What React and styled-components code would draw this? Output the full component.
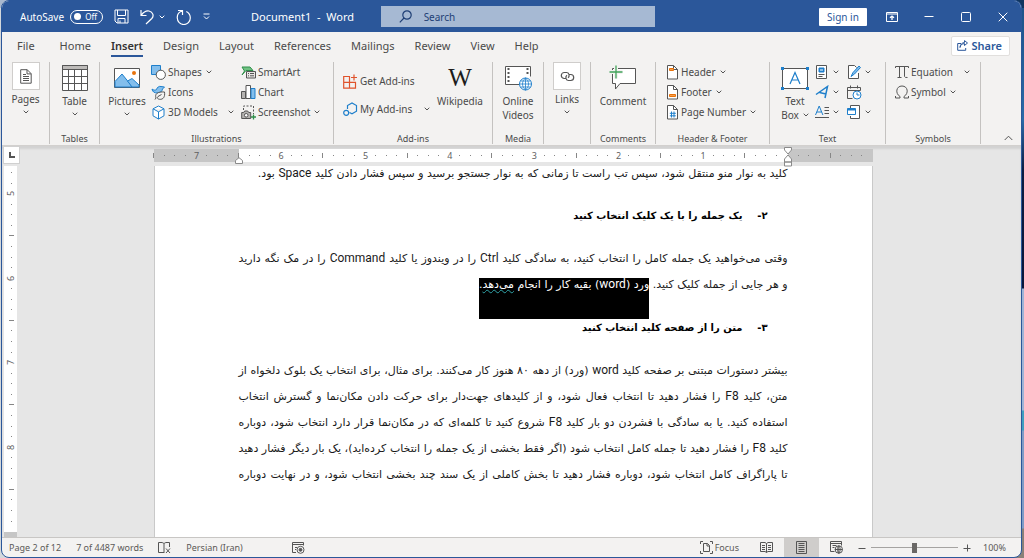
import React from 'react';
import styled, { createGlobalStyle, css, ThemeProvider } from 'styled-components';

const theme = {
  color: {
    brand: '#2b579a',
    ribbon: '#f3f2f1',
    canvas: '#e6e6e6',
    text: '#4a4a4a',
    line: '#c4c2c0',
  },
  font: {
    ui: "'Noto Sans', 'Open Sans', sans-serif",
    persian: "'DejaVu Sans', sans-serif",
    latin: 'Roboto, sans-serif',
  },
};

const GlobalStyle = createGlobalStyle`
  *, *::before, *::after {
    box-sizing: border-box;
  }
  body {
    min-height: 100vh;
    margin: 0;
    background:
      linear-gradient(to right, #a9b9cf 86%, #10355f 87%) top / 100% 8px no-repeat,
      linear-gradient(#d3d8dc, #d3d8dc) left / 12px 100% no-repeat,
      linear-gradient(#1d5288 0, #2a6aa8 120px, #0b1d42 170px, #08163a 288px, #9fb4d6 289px,
        #9fb4d6 410px, #3f9fc0 411px, #3f9fc0 430px, #7f9cc6 431px, #7f9cc6 528px, #8a8078 529px);
  }
  button, input {
    font: inherit;
    color: inherit;
  }
  button {
    padding: 0;
    border: 0;
    background: none;
  }
`;

const Window = styled.div`
  display: flex;
  flex-direction: column;
  height: 100vh;
  margin: 0 2px 0 1px;
  border: 1px solid ${({ theme }) => theme.color.brand};
  border-radius: 8px;
  overflow: hidden;
  background: ${({ theme }) => theme.color.ribbon};
  color: ${({ theme }) => theme.color.text};
  font-family: ${({ theme }) => theme.font.ui};
  font-size: 10px;
  line-height: 14px;
  white-space: nowrap;
`;

/* title bar */

const TitleBar = styled.header`
  display: grid;
  grid-template-columns: 379fr 275fr 366fr;
  align-items: center;
  flex: 0 0 31px;
  background: ${({ theme }) => theme.color.brand};
  color: #ffffff;
`;

const QuickAccess = styled.div`
  display: flex;
  align-items: center;
  padding-left: 18px;
`;

const AutoSave = styled.label`
  display: flex;
  align-items: center;
  gap: 6px;
  margin-right: 11px;
`;

const Toggle = styled.input`
  appearance: none;
  display: flex;
  align-items: center;
  justify-content: space-between;
  width: 33px;
  height: 14px;
  margin: 0;
  padding: 0 5px 0 3px;
  border: 1px solid #ffffff;
  border-radius: 7px;
  font-size: 8px;
  line-height: 12px;

  &::before {
    content: '';
    width: 7px;
    height: 7px;
    border-radius: 50%;
    background: #ffffff;
  }

  &::after {
    content: 'Off';
  }
`;

const BarButton = styled.button`
  display: flex;
  align-items: center;
  gap: 5px;
  margin-right: 11px;
`;

const DocTitle = styled.span`
  margin-left: 30px;
  font-size: 11px;
  white-space: pre;
`;

const SearchBox = styled.label`
  display: flex;
  align-items: center;
  gap: 12px;
  height: 21px;
  padding-left: 18px;
  background: #a6b9d3;
  color: #1f3f75;
`;

const SearchInput = styled.input`
  flex: 1;
  min-width: 0;
  padding: 0;
  border: 0;
  background: none;
  font-size: 10px;

  &::placeholder {
    color: #1f3f75;
    opacity: 1;
  }
`;

const WindowControls = styled.div`
  display: flex;
  align-items: center;
  justify-content: flex-end;
  padding-right: 12px;
`;

const SignIn = styled.button`
  width: 48px;
  height: 18px;
  margin-right: 18px;
  border-radius: 1px;
  background: #ffffff;
  color: ${({ theme }) => theme.color.brand};
`;

const ControlButton = styled.button`
  display: flex;
  justify-content: center;
  width: 12px;
  margin-left: ${({ $gap }) => $gap || 25}px;
`;

/* tabs */

const TabRow = styled.nav`
  display: flex;
  align-items: center;
  flex: 0 0 27px;
  padding: 0 11px 0 5px;
  font-size: 11px;
`;

const Tab = styled.a`
  position: relative;
  padding: 0 10px;
  line-height: 22px;
  color: inherit;
  text-decoration: none;

  &:first-child {
    margin-right: 5px;
  }

  ${({ $active }) =>
    $active &&
    css`
      color: #333333;
      font-weight: 600;

      &::after {
        content: '';
        position: absolute;
        right: 10px;
        bottom: 0;
        left: 10px;
        height: 2px;
        background: ${({ theme }) => theme.color.brand};
      }
    `}
`;

const ShareButton = styled.button`
  display: flex;
  align-items: center;
  gap: 4px;
  height: 20px;
  margin-left: auto;
  padding: 0 7px 0 5px;
  border: 1px solid #e1dfdd;
  border-radius: 2px;
  background: #ffffff;
  color: ${({ theme }) => theme.color.brand};
  font-weight: 600;
`;

/* ribbon */

const Ribbon = styled.section`
  display: flex;
  flex: 0 0 87px;
  padding-top: 3px;
  border-bottom: 1px solid #d2d0ce;
`;

const Group = styled.div`
  display: flex;
  flex-direction: column;
  justify-content: space-between;
  width: ${({ $width }) => $width}px;
  height: 82px;
  border-right: 1px solid ${({ theme }) => theme.color.line};
`;

const GroupBody = styled.div`
  display: flex;
  justify-content: ${({ $center }) => ($center ? 'center' : 'flex-start')};
  padding-left: ${({ $indent }) => $indent || 0}px;
`;

const GroupLabel = styled.div`
  font-size: 9px;
  line-height: 10px;
  text-align: center;
`;

const BigButton = styled.button`
  display: flex;
  flex-direction: column;
  align-items: center;
  width: ${({ $width }) => ($width ? `${$width}px` : 'auto')};
`;

const BigIcon = styled.span`
  display: flex;
  align-items: center;
  justify-content: center;
  height: 32px;
`;

const IconTile = styled.span`
  display: flex;
  align-items: center;
  justify-content: center;
  width: 28px;
  height: 28px;
  margin-bottom: 2px;
  border: 1px solid #cfcdcb;
  background: #ffffff;
`;

const ArrowLine = styled.span`
  display: flex;
  align-items: center;
  justify-content: center;
  height: 12px;
`;

const LabelWithArrow = styled.span`
  display: flex;
  align-items: center;
  gap: 4px;
`;

const Column = styled.div`
  display: flex;
  flex-direction: column;
  width: ${({ $width }) => ($width ? `${$width}px` : 'auto')};
  padding-top: ${({ $top }) => $top || 0}px;
`;

const RowButton = styled.button`
  display: flex;
  align-items: center;
  gap: 2px;
  height: ${({ $tall }) => ($tall ? 28 : 20)}px;
  padding-right: 7px;

  svg:last-child:not(:first-child) {
    margin-left: ${({ $spread }) => ($spread ? 'auto' : '2px')};
  }
`;

const CollapseButton = styled.button`
  display: flex;
  align-self: flex-end;
  margin: 0 8px 4px auto;
`;

/* document */

const Workspace = styled.main`
  display: grid;
  grid-template-columns: minmax(20px, 1fr) minmax(0, 719px) minmax(20px, 1fr);
  flex: 1;
  min-height: 0;
  padding-left: 3px;
  border-bottom: 1px solid #c8c6c4;
  background: ${({ theme }) => theme.color.canvas};
  box-shadow: inset 0 3px 2px #d2d2d2;
`;

const RulerSide = styled.div`
  display: flex;
  flex-direction: column;
  width: 17px;
  margin-left: -2px;
`;

const TabStop = styled.button`
  display: flex;
  align-items: center;
  justify-content: center;
  flex: 0 0 18px;
  margin-bottom: 2px;
  border: 1px solid #d0d0d0;
  background: #ffffff;
`;

const VerticalRuler = styled.div`
  display: flex;
  flex: 1;
  flex-direction: column;
  align-items: center;
  justify-content: space-between;
  width: 13px;
  min-height: 0;
  margin-left: 1px;
  padding: 7px 0 10px;
  background: #ffffff;
`;

const RulerEnd = styled.div`
  flex: 0 0 5px;
  width: 13px;
  margin-left: 1px;
  background: #c6c6c6;
`;

const PageColumn = styled.div`
  display: flex;
  flex-direction: column;
  min-height: 0;
  padding-top: 3px;
`;

const HorizontalRuler = styled.div`
  display: flex;
  flex: 0 0 13px;
  margin-bottom: 4px;
`;

const RulerPart = styled.div`
  position: relative;
  display: flex;
  align-items: center;
  justify-content: space-between;
  flex: ${({ $margin }) => ($margin ? '0 0 85px' : '1')};
  background: ${({ $margin }) => ($margin ? '#c6c6c6' : '#ffffff')};
`;

const Tick = styled.span`
  display: flex;
  align-items: center;
  justify-content: center;
  width: 0;
  height: 0;
  font-size: 9px;
  color: #5f5f5f;
  transform: ${({ $turned }) => ($turned ? 'rotate(-90deg)' : 'none')};

  &::before {
    content: '';
    flex: none;
    width: 1px;
    height: ${({ $kind }) => ({ dot: 1, bar: 5 }[$kind] || 0)}px;
    background: #868686;
  }
`;

const Indent = styled.svg`
  position: absolute;
  z-index: 1;
  left: ${({ $side }) => ($side === 'left' ? '-4px' : 'auto')};
  right: ${({ $side }) => ($side === 'right' ? '-4px' : 'auto')};
  top: ${({ $top }) => $top}px;
`;

const Page = styled.article`
  flex: 1;
  min-height: 0;
  overflow: hidden;
  padding: 0 84px;
  border-right: 1px solid #c9c9c9;
  border-left: 1px solid #c9c9c9;
  background: #ffffff;
  color: #1a1a1a;
  font-family: ${({ theme }) => theme.font.persian};
  font-size: 11px;
  line-height: 26px;
  direction: rtl;
`;

const Flow = styled.div`
  display: flex;
  flex-direction: column;
  gap: 17px;
`;

const Paragraph = styled.p`
  margin: 0;

  /* the page is scrolled to the middle of this one */
  &:first-child {
    padding-bottom: 5px;
    line-height: 14px;
  }
`;

const Line = styled.span`
  display: block;
  text-align-last: ${({ $ragged }) => ($ragged ? 'right' : 'justify')};
`;

const Latin = styled.span`
  font-family: ${({ theme }) => theme.font.latin};
  font-size: 12px;
  line-height: 14px;
`;

const Heading = styled.h2`
  display: flex;
  margin: 0;
  padding-right: 20px;
  color: #000000;
  font-size: 10px;
  font-weight: 700;
`;

const HeadingNumber = styled.span`
  width: 25px;
`;

const Selected = styled.mark`
  padding-bottom: 28px;
  background: #000000;
  color: #ffffff;
`;

const Flagged = styled.span`
  text-decoration: underline wavy #2fa3a8 1px;
`;

/* status bar */

const StatusBar = styled.footer`
  display: flex;
  align-items: center;
  flex: 0 0 19px;
  padding: 0 15px 0 7px;
  color: #5c5a58;
  font-size: 9px;
`;

const StatusButton = styled.button`
  display: flex;
  align-items: center;
  justify-content: center;
  gap: 2px;
  height: 19px;
  margin-right: ${({ $after }) => $after || 0}px;
`;

const ViewButton = styled.button`
  display: flex;
  align-items: center;
  justify-content: center;
  width: 35px;
  height: 19px;
  background: ${({ $active }) => ($active ? '#cfcdcb' : 'none')};
`;

const StatusRight = styled.div`
  display: flex;
  align-items: center;
  margin-left: auto;
`;

const Zoom = styled.div`
  display: flex;
  align-items: center;
  margin-left: 4px;
`;

const ZoomSlider = styled.input`
  appearance: none;
  width: 87px;
  height: 11px;
  margin: 0 5px;
  background: linear-gradient(#a5a3a1, #a5a3a1) center / 100% 1px no-repeat;

  &::-webkit-slider-thumb {
    appearance: none;
    width: 5px;
    height: 10px;
    background: #6a6866;
  }
`;

const ZoomValue = styled.span`
  width: 35px;
  text-align: right;
`;

/* icons */

const Icon = ({ w = 14, h = 14, children, ...rest }) => (
  <svg width={w} height={h} viewBox={`0 0 ${w} ${h}`} fill="none" stroke="#555" strokeWidth="1" aria-hidden="true" {...rest}>
    {children}
  </svg>
);

const Arrow = ({ color = '#555' }) => (
  <Icon w={6} h={4} stroke={color}><path d="M.7.7 3 3 5.3.7" /></Icon>
);

const SaveIcon = () => (
  <Icon w={15} h={15} stroke="#fff"><path d="M1 1h13v13H3l-2-2zM3.5 1v5.500h8V1M4 14V9.500h7V14M6 14v-2.500" /></Icon>
);

const UndoIcon = () => (
  <Icon w={14} h={16} stroke="#fff" strokeWidth="1.2"><path d="M1 1v5.500h5.500M1.200 6.300C4 2.500 6.500 1.500 9 2c4 .8 5.200 5 2.800 7.500L6 15" /></Icon>
);

const RedoIcon = () => (
  <Icon w={16} h={16} stroke="#fff" strokeWidth="1.2"><path d="M2 1.500h4.500V6M6.300 1.800C3 3 1 5.800 1.300 9a6.500 6.500 0 0 0 13 0c0-2.800-1.400-5.200-4-6.500" /></Icon>
);

const CustomizeIcon = () => (
  <Icon w={7} h={7} stroke="#fff"><path d="M.5 1h6M1 3.500 3.500 6 6 3.500" /></Icon>
);

const SearchIcon = () => (
  <Icon w={13} h={13} stroke="#1f3f75" strokeWidth="1.2"><circle cx="8" cy="5" r="4.200" /><path d="M5 8 .8 12.300" /></Icon>
);

const RibbonOptionsIcon = () => (
  <Icon w={12} h={10} stroke="#fff"><path d="M.5.5h11v9H.5zM.5 2h11" /><path d="M6 8V4M4 5.800 6 4l2 1.800" strokeWidth="1.300" /></Icon>
);

const ShareIcon = () => (
  <Icon w={11} h={11} stroke="#2b579a"><path d="M4 3.500H.7v6.800h8V8M3 7.500c.3-2.500 2-3.800 4.500-3.900V5.500L10.500 3 7.500.6v1.900C5 2.700 3.200 4.500 3 7.500z" /></Icon>
);

const PagesIcon = () => (
  <Icon w={12} h={15}><path d="M.7.7h6.500l4 4v9.500H.7zM7 .7v4.200h4" fill="#fff" /><path d="M3 5.500h3M3 7.500h6M3 9.500h6M3 11.500h6" /></Icon>
);

const TableIcon = () => (
  <Icon w={26} h={26}><path d="M.5.5h25v25H.5z" fill="#fff" /><path d="M.5.5h25v4H.5z" fill="#bdbbb9" /><path d="M.5 11.500h25M.5 18.500h25M6.500 4.500v21M12.500 4.500v21M19.500 4.500v21" /></Icon>
);

const PicturesIcon = () => (
  <Icon w={26} h={20}>
    <path d="M.5.500h25v19H.5z" fill="#fff" />
    <path d="M1 13.500 8 6l10.500 13H1z" fill="#83beec" stroke="#1e7fcb" />
    <path d="M13.500 13 18 10.500 25 17v2h-7z" fill="#83beec" stroke="#1e7fcb" />
    <circle cx="20" cy="5" r="2" fill="#e8730c" stroke="none" />
  </Icon>
);

const ShapesIcon = () => (
  <Icon w={15} h={15}><path d="M.5.5h9v9h-9z" fill="#83beec" stroke="#1e7fcb" /><circle cx="9.800" cy="9.800" r="4.600" fill="#fff" /></Icon>
);

const IconsIcon = () => (
  <Icon w={15} h={15}>
    <path d="M1 4c1.500 1.300 3 1.500 4.500.5C6 2.500 8 .8 10 1.500L13.500 2l-2 2c-.3 2.500-2.500 4-5 4C3.500 8 1.500 7 1 4z" fill="#83beec" stroke="#1e7fcb" />
    <path d="M5 13c-1.500-4 1.500-6.500 8.500-6 .8 5-1.500 7.800-5 7.300-2-.3-2.800-1.500-1.500-2.800L10.500 9.500M5 13l-1 1.500" fill="#f3f2f1" />
  </Icon>
);

const CubeIcon = () => (
  <Icon w={15} h={15} stroke="#1e7fcb"><path d="M7.500 1 13 3.800v7L7.500 14 2 10.800v-7zM2 3.800l5.500 3 5.500-3M7.500 6.800V14" fill="#fff" /></Icon>
);

const SmartArtIcon = () => (
  <Icon w={15} h={13}>
    <path d="M1 1h8l3 3.500H5L1 9l2.500-4z" fill="#6fc182" stroke="#2f8f4a" />
    <path d="M5.500 5.500h9v6.500h-9z" fill="#e8e6e4" /><path d="M7 7.500h1M9 7.500h4M7 9.800h1M9 9.800h4" />
  </Icon>
);

const ChartIcon = () => (
  <Icon w={15} h={14}><path d="M.5 6.500h4V13.500h-4z" fill="#b5b3b1" /><path d="M5 .5h4.500v13H5z" fill="#fff" /><path d="M10 3.500h4v10h-4z" fill="#83beec" stroke="#1e7fcb" /></Icon>
);

const ScreenshotIcon = () => (
  <Icon w={15} h={15}>
    <path d="M2.500 5V1h10v8" strokeDasharray="2 1.500" />
    <path d="M.7 7.500h2l1-1.500h3l1 1.500h2V13.500h-9z" fill="#b5b3b1" /><circle cx="5.200" cy="10.300" r="1.800" fill="#fff" />
    <path d="M12.500 9.500v5M10 12h5" stroke="#2f8f4a" strokeWidth="1.300" />
  </Icon>
);

const StoreIcon = () => (
  <Icon w={15} h={15} stroke="#e0532c"><path d="M.7 2.500H6.500v5.800H.7zM.7 8.300h5.800v5.800H.7zM6.500 8.300h6v5.800h-6zM11 .5v6M8 3.500h6" strokeWidth="1.200" /></Icon>
);

const MyAddinsIcon = () => (
  <Icon w={15} h={15} stroke="#1e7fcb"><path d="M4.500 7V3.500L9 1l4.500 2.500v5.700L9 11.800 6.500 10.500" strokeWidth="1.200" /><circle cx="3.200" cy="10.800" r="2.500" strokeWidth="1.200" /></Icon>
);

const WikiMark = styled.span`
  font-family: 'Liberation Serif', serif;
  font-size: 25px;
  line-height: 28px;
  color: #1c1c1c;
`;

const VideoIcon = () => (
  <Icon w={27} h={25}>
    <path d="M14 18.500H.5V.5h25v10" fill="#fff" />
    <path d="M3.500 2v15M22.500 2v8" strokeWidth="2" strokeDasharray="2 2" />
    <circle cx="20.500" cy="18" r="6" fill="#fff" stroke="#1e7fcb" />
    <path d="M14.500 18h12M20.500 12v12M15.500 15h10M15.500 21h10M20.500 12c-4 3-4 9 0 12M20.500 12c4 3 4 9 0 12" stroke="#1e7fcb" strokeWidth=".8" />
  </Icon>
);

const LinkIcon = () => (
  <Icon w={15} h={11}>
    <path d="M6 7.500H4.300A3 3 0 1 1 4.300 1.500h2.400C9.500 1.700 9.800 5.500 8 6.800" strokeWidth="1.200" />
    <path d="M9 3.500h1.700a3 3 0 1 1 0 6H8.300C5.500 9.300 5.200 5.500 7 4.200" strokeWidth="1.200" />
  </Icon>
);

const CommentIcon = () => (
  <Icon w={28} h={26}>
    <path d="M3.500 3.500h23v15H11L6.500 24v-5.500h-3z" fill="#fff" />
    <path d="M7 .5v13M.5 7h13" stroke="#f3f2f1" strokeWidth="4" />
    <path d="M7 .5v13M.5 7h13" stroke="#41a35a" strokeWidth="1.300" />
  </Icon>
);

const DocIcon = ({ children }) => (
  <Icon w={13} h={15}><path d="M1.500.5h6l4 4v9.500h-10z" fill="#fff" /><path d="M7.500.5v4h4" />{children}</Icon>
);

const HeaderIcon = () => <DocIcon><path d="M3.500 3.500h4v2h-4z" fill="#f7a04a" stroke="#e8730c" /></DocIcon>;
const FooterIcon = () => <DocIcon><path d="M3.500 9.500h6v2h-6z" fill="#f7a04a" stroke="#e8730c" /></DocIcon>;
const NumberIcon = () => <DocIcon><path d="M5.500 6.500v6M8 6.500v6M3.800 8.300h6M3.800 10.800h6" stroke="#1e7fcb" /></DocIcon>;

const TextBoxIcon = () => (
  <Icon w={28} h={23}>
    <path d="M1.500 1.500h25v20h-25z" fill="#fff" />
    <path d="M9 17 14 5.500 19 17M10.800 13h6.400" stroke="#1e7fcb" strokeWidth="1.200" />
    <path d="M0 0h3v3H0zM25 0h3v3h-3zM0 20h3v3H0zM25 20h3v3h-3z" fill="#1e7fcb" stroke="none" />
  </Icon>
);

const QuickPartsIcon = () => (
  <Icon><path d="M1.500.5h10v13h-10z" fill="#fff" /><path d="M4 3h5v4H4z" fill="#1e7fcb" stroke="#1e7fcb" /><path d="M5 5h3" stroke="#fff" /><path d="M3.500 9.500h6M3.500 11.500h4" /></Icon>
);

const WordArtIcon = () => (
  <Icon stroke="#1e7fcb" strokeWidth="1.500"><path d="M1 9.500 12.500 1.500 10 13M4.500 7.500 11 9" /></Icon>
);

const DropCapIcon = () => (
  <Icon><path d="M.5 10 4.200 1l3.700 9M1.800 7h4.800" stroke="#1e7fcb" /><path d="M9.500 2.500H14M9.500 5.500H14M9.500 8.500H14M0 12.500h14" /></Icon>
);

const SignatureIcon = () => (
  <Icon><path d="M11.500 8v5.500h-10V.5h6l2 2" fill="#fff" /><path d="M4 11.500 6 7.500 12 1l1.500 1.500L7.500 9z" fill="#83beec" stroke="#1e7fcb" /></Icon>
);

const DateIcon = () => (
  <Icon w={15} h={15}><path d="M5.500 13.500H.5v-11h13v3M.5 5.500h13M3.500.5v3M10.500.5v3" /><circle cx="10" cy="10" r="4" fill="#fff" stroke="#1e7fcb" /><path d="M10 7.500V10h2.500" stroke="#1e7fcb" /></Icon>
);

const ObjectIcon = () => (
  <Icon><path d="M3.500 3V.5h9v13h-9V11" fill="#fff" /><path d="M.5 3.500h8v6h-8z" fill="#fff" stroke="#1e7fcb" /><path d="M.5 4.500h8" stroke="#1e7fcb" strokeWidth="2" /></Icon>
);

const PiIcon = () => (
  <Icon><path d="M.5 3V1.500h13V3M4.500 1.500v11M2.500 12.500h4M9.500 1.500v10q.2 1.200 3 1" /></Icon>
);

const OmegaIcon = () => (
  <Icon><path d="M.5 11v2H5v-1.500C0 8.500 1 1 7 1s7 7.500 2 10.500V13h4.500v-2" /></Icon>
);

const ProofIcon = () => (
  <Icon w={13} h={12}><path d="M6 10.500H.5V.5h3.700l1.800 1 1.800-1h3.700V5M6 2v9M8 6.500l4 4.500M12 6.500 8 11" /></Icon>
);

const MacroIcon = () => (
  <Icon w={13} h={12}><path d="M4 10.500H.5V.5h11v3M.5 2.500h11M3 5.500h2M3 7.500h1" /><circle cx="8.500" cy="7.800" r="3.500" fill="#fff" /><circle cx="8.500" cy="7.800" r="1.500" fill="#555" /></Icon>
);

const FocusIcon = () => (
  <Icon w={13} h={13}><path d="M.5 3V.5H3M10 .5h2.500V3M.5 10v2.500H3M10 12.500h2.500V10M3.500 2.500h4l2 2v6h-6zM7 2.500V5h2.500" /></Icon>
);

const ReadIcon = () => (
  <Icon w={13} h={11}><path d="M6.500 1.500 5 .5H.5v9H5l1.500 1 1.500-1h4.500v-9H8zM6.500 1.500v9M2 3.500h3M2 5.500h3M2 7.500h3M8 3.500h3M8 5.500h3M8 7.500h3" /></Icon>
);

const PrintIcon = () => (
  <Icon w={11} h={13}><path d="M.5.5h10v12H.5zM2.500 2.500h6M2.500 4.500h6M2.500 6.500h6M2.500 8.500h6M2.500 10.500h6" /></Icon>
);

const WebIcon = () => (
  <Icon w={13} h={13}><path d="M4.500 10.500H.5V.5h11v4M.5 2.500h11M2.500 4.500h4M2.500 6.500h2" /><circle cx="8.800" cy="8.500" r="3.700" fill="#fff" /><path d="M5 8.500h7.500M8.800 4.800v7.500M8.800 4.800c-2 2-2 5 0 7.500M8.800 4.800c2 2 2 5 0 7.500" /></Icon>
);

const MARKS = ['number', 'dot', 'dot', 'dot', 'bar', 'dot', 'dot', 'dot'];

// positions count eighths of a unit from zero
const Ticks = ({ from, to, turned }) => {
  const step = from < to ? 1 : -1;
  const count = Math.abs(to - from) + 1;
  return Array.from({ length: count }, (_, i) => {
    const position = from + i * step;
    const kind = MARKS[position % 8];
    return (
      <Tick key={position} $kind={kind} $turned={turned}>
        {kind === 'number' && position !== 0 ? position / 8 : null}
      </Tick>
    );
  });
};

const tabs = ['File', 'Home', 'Insert', 'Design', 'Layout', 'References', 'Mailings', 'Review', 'View', 'Help'];

const Row = ({ icon, label, arrow, ...rest }) => (
  <RowButton aria-label={label ? undefined : rest.title} {...rest}>
    {icon}
    {label && <span>{label}</span>}
    {arrow && <Arrow />}
  </RowButton>
);

const App = () => (
  <ThemeProvider theme={theme}>
    <GlobalStyle />
    <Window>
      <TitleBar>
        <QuickAccess>
          <AutoSave>
            AutoSave
            <Toggle type="checkbox" role="switch" />
          </AutoSave>
          <BarButton aria-label="Save"><SaveIcon /></BarButton>
          <BarButton aria-label="Undo"><UndoIcon /><Arrow color="#fff" /></BarButton>
          <BarButton aria-label="Redo"><RedoIcon /></BarButton>
          <BarButton aria-label="Customize Quick Access Toolbar"><CustomizeIcon /></BarButton>
          <DocTitle>{'Document1  -  Word'}</DocTitle>
        </QuickAccess>
        <SearchBox>
          <SearchIcon />
          <SearchInput type="text" placeholder="Search" aria-label="Search" />
        </SearchBox>
        <WindowControls>
          <SignIn>Sign in</SignIn>
          <ControlButton $gap={1} aria-label="Ribbon Display Options"><RibbonOptionsIcon /></ControlButton>
          <ControlButton aria-label="Minimize"><Icon w={10} h={10} stroke="#fff"><path d="M.5 4.500h9" /></Icon></ControlButton>
          <ControlButton aria-label="Maximize"><Icon w={10} h={10} stroke="#fff"><rect x=".5" y=".5" width="9" height="9" rx="1" /></Icon></ControlButton>
          <ControlButton aria-label="Close"><Icon w={10} h={10} stroke="#fff"><path d="m.7.7 8.600 8.600M9.300.7.700 9.300" /></Icon></ControlButton>
        </WindowControls>
      </TitleBar>

      <TabRow>
        {tabs.map((tab) => (
          <Tab key={tab} href={`#${tab.toLowerCase()}`} $active={tab === 'Insert'}>{tab}</Tab>
        ))}
        <ShareButton><ShareIcon />Share</ShareButton>
      </TabRow>

      <Ribbon>
        <Group $width={48}>
          <GroupBody $center>
            <BigButton><IconTile><PagesIcon /></IconTile>Pages<ArrowLine><Arrow /></ArrowLine></BigButton>
          </GroupBody>
        </Group>

        <Group $width={50}>
          <GroupBody $center>
            <BigButton><BigIcon><TableIcon /></BigIcon>Table<ArrowLine><Arrow /></ArrowLine></BigButton>
          </GroupBody>
          <GroupLabel>Tables</GroupLabel>
        </Group>

        <Group $width={234}>
          <GroupBody $indent={3}>
            <BigButton $width={48}><BigIcon><PicturesIcon /></BigIcon>Pictures<ArrowLine><Arrow /></ArrowLine></BigButton>
            <Column $width={90}>
              <Row icon={<ShapesIcon />} label="Shapes" arrow />
              <Row icon={<IconsIcon />} label="Icons" />
              <Row icon={<CubeIcon />} label="3D Models" arrow $spread />
            </Column>
            <Column>
              <Row icon={<SmartArtIcon />} label="SmartArt" />
              <Row icon={<ChartIcon />} label="Chart" />
              <Row icon={<ScreenshotIcon />} label="Screenshot" arrow />
            </Column>
          </GroupBody>
          <GroupLabel>Illustrations</GroupLabel>
        </Group>

        <Group $width={159}>
          <GroupBody $indent={9}>
            <Column $width={94} $top={5}>
              <Row icon={<StoreIcon />} label="Get Add-ins" $tall />
              <Row icon={<MyAddinsIcon />} label="My Add-ins" arrow $tall $spread />
            </Column>
            <BigButton $width={46}><BigIcon><WikiMark>W</WikiMark></BigIcon>Wikipedia</BigButton>
          </GroupBody>
          <GroupLabel>Add-ins</GroupLabel>
        </Group>

        <Group $width={51}>
          <GroupBody $center>
            <BigButton><BigIcon><VideoIcon /></BigIcon>Online<br />Videos</BigButton>
          </GroupBody>
          <GroupLabel>Media</GroupLabel>
        </Group>

        <Group $width={47}>
          <GroupBody $center>
            <BigButton><IconTile><LinkIcon /></IconTile>Links<ArrowLine><Arrow /></ArrowLine></BigButton>
          </GroupBody>
        </Group>

        <Group $width={65}>
          <GroupBody $center>
            <BigButton><BigIcon><CommentIcon /></BigIcon>Comment</BigButton>
          </GroupBody>
          <GroupLabel>Comments</GroupLabel>
        </Group>

        <Group $width={114}>
          <GroupBody $indent={10}>
            <Column>
              <Row icon={<HeaderIcon />} label="Header" arrow />
              <Row icon={<FooterIcon />} label="Footer" arrow />
              <Row icon={<NumberIcon />} label="Page Number" arrow />
            </Column>
          </GroupBody>
          <GroupLabel>Header &amp; Footer</GroupLabel>
        </Group>

        <Group $width={116}>
          <GroupBody $indent={5}>
            <BigButton $width={40}>
              <BigIcon><TextBoxIcon /></BigIcon>
              Text
              <LabelWithArrow>Box<Arrow /></LabelWithArrow>
            </BigButton>
            <Column $width={32}>
              <Row icon={<QuickPartsIcon />} title="Quick Parts" arrow />
              <Row icon={<WordArtIcon />} title="WordArt" arrow />
              <Row icon={<DropCapIcon />} title="Drop Cap" arrow />
            </Column>
            <Column>
              <Row icon={<SignatureIcon />} title="Signature Line" arrow />
              <Row icon={<DateIcon />} title="Date and Time" />
              <Row icon={<ObjectIcon />} title="Object" arrow />
            </Column>
          </GroupBody>
          <GroupLabel>Text</GroupLabel>
        </Group>

        <Group $width={95}>
          <GroupBody $indent={9}>
            <Column $width={82}>
              <Row icon={<PiIcon />} label="Equation" arrow $spread />
              <Row icon={<OmegaIcon />} label="Symbol" arrow />
            </Column>
          </GroupBody>
          <GroupLabel>Symbols</GroupLabel>
        </Group>
        <CollapseButton aria-label="Collapse the Ribbon">
          <Icon w={9} h={6}><path d="M.7 5 4.500 1.200 8.300 5" /></Icon>
        </CollapseButton>
      </Ribbon>

      <Workspace>
        <RulerSide>
          <TabStop aria-label="Tab stop"><Icon w={6} h={6} strokeWidth="2"><path d="M1 0v5h5" /></Icon></TabStop>
          <VerticalRuler><Ticks from={38} to={71} turned /></VerticalRuler>
          <RulerEnd />
        </RulerSide>
        <PageColumn>
          <HorizontalRuler>
            <RulerPart $margin><Ticks from={60} to={53} /><Tick /></RulerPart>
            <RulerPart>
              <Indent $side="left" $top={8} width="8" height="7" viewBox="0 0 8 7" fill="#fff" stroke="#8a8a8a"><path d="M.5 6.500V3.500L4 .7l3.500 2.800v3z" /></Indent>
              <Ticks from={52} to={0} />
              <Indent $side="right" $top={-2} width="8" height="20" viewBox="0 0 8 20" fill="#fff" stroke="#8a8a8a">
                <path d="M.5.5h7V3L4 7 .5 3zM.5 15v-3L4 8l3.500 4v3zM.5 15h7v4h-7z" />
              </Indent>
            </RulerPart>
            <RulerPart $margin><Tick /><Ticks from={1} to={7} /><Tick /></RulerPart>
          </HorizontalRuler>
          <Page lang="fa">
            <Flow>
              <Paragraph>
                <Line $ragged>کلید به نوار منو منتقل شود، سپس تب راست تا زمانی که به نوار جستجو برسید و سپس فشار دادن کلید <Latin>Space</Latin> بود.</Line>
              </Paragraph>
              <Heading><HeadingNumber>۲-</HeadingNumber>یک جمله را با یک کلیک انتخاب کنید</Heading>
              <Paragraph>
                <Line>وقتی می‌خواهید یک جمله کامل را انتخاب کنید، به سادگی کلید <Latin>Ctrl</Latin> را در ویندوز یا کلید <Latin>Command</Latin> را در مک نگه دارید</Line>
                <Line $ragged>و هر جایی از جمله کلیک کنید. <Selected>ورد (<Latin>word</Latin>) بقیه کار را انجام <Flagged>می‌دهد</Flagged>.</Selected></Line>
              </Paragraph>
              <Heading><HeadingNumber>۳-</HeadingNumber>متن را از صفحه کلید انتخاب کنید</Heading>
              <Paragraph>
                <Line>بیشتر دستورات مبتنی بر صفحه کلید <Latin>word</Latin> (ورد) از دهه ۸۰ هنوز کار می‌کنند. برای مثال، برای انتخاب یک بلوک دلخواه از</Line>
                <Line>متن، کلید <Latin>F8</Latin> را فشار دهید تا انتخاب فعال شود، و از کلیدهای جهت‌دار برای حرکت دادن مکان‌نما و گسترش انتخاب</Line>
                <Line>استفاده کنید. یا به سادگی با فشردن دو بار کلید <Latin>F8</Latin> شروع کنید تا کلمه‌ای که در مکان‌نما قرار دارد انتخاب شود، دوباره</Line>
                <Line>کلید <Latin>F8</Latin> را فشار دهید تا جمله کامل انتخاب شود (اگر فقط بخشی از یک جمله را انتخاب کرده‌اید)، یک بار دیگر فشار دهید</Line>
                <Line>تا پاراگراف کامل انتخاب شود، دوباره فشار دهید تا بخش کاملی از یک سند چند بخشی انتخاب شود، و در نهایت دوباره</Line>
              </Paragraph>
            </Flow>
          </Page>
        </PageColumn>
      </Workspace>

      <StatusBar>
        <StatusButton $after={15}>Page 2 of 12</StatusButton>
        <StatusButton $after={15}>7 of 4487 words</StatusButton>
        <StatusButton $after={15} aria-label="Proofing"><ProofIcon /></StatusButton>
        <StatusButton $after={49}>Persian (Iran)</StatusButton>
        <StatusButton aria-label="Record macro"><MacroIcon /></StatusButton>
        <StatusRight>
          <StatusButton $after={10}><FocusIcon />Focus</StatusButton>
          <ViewButton aria-label="Read mode"><ReadIcon /></ViewButton>
          <ViewButton $active aria-label="Print layout"><PrintIcon /></ViewButton>
          <ViewButton aria-label="Web layout"><WebIcon /></ViewButton>
          <Zoom>
            <StatusButton aria-label="Zoom out"><Icon w={8} h={8}><path d="M.5 4.500h7" /></Icon></StatusButton>
            <ZoomSlider type="range" min="0" max="200" defaultValue="100" aria-label="Zoom" />
            <StatusButton aria-label="Zoom in"><Icon w={8} h={8}><path d="M.5 4.500h7M4.500.5v7" /></Icon></StatusButton>
            <ZoomValue>100%</ZoomValue>
          </Zoom>
        </StatusRight>
      </StatusBar>
    </Window>
  </ThemeProvider>
);

export default App;
